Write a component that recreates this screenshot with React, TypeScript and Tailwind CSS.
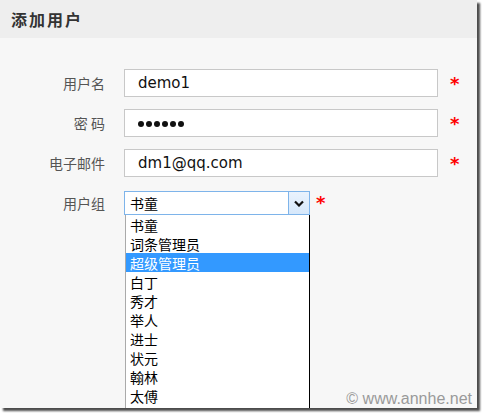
const cjk = "font-['Noto_Sans_CJK_SC',sans-serif]";

function Star({ className = "" }: { className?: string }) {
  return (
    <span className={`text-[18px] font-bold leading-none text-[#ff0000] font-['DejaVu_Sans',sans-serif] ${className}`}>
      *
    </span>
  );
}

function Row({ label, children }: { label: string; children: React.ReactNode }) {
  return (
    <div className="flex h-[28px] items-center">
      <div className={`w-[105px] text-right text-[14px] text-[#555] ${cjk}`}>{label}</div>
      <div className="ml-[19px] flex h-full w-[314px] items-center border border-[#c8c8c8] bg-white pl-[13px] text-[15px] text-[#111] font-['DejaVu_Sans',sans-serif]">
        {children}
      </div>
      <Star className="ml-[12px] mt-[2px]" />
    </div>
  );
}

const groups = ["书童", "词条管理员", "超级管理员", "白丁", "秀才", "举人", "进士", "状元", "翰林", "太傅"];

export default function App() {
  return (
    <div className="h-[413px] w-[482px] overflow-hidden bg-white">
      <div className="h-[408px] w-[477px] bg-[#f7f7f7] shadow-[3px_3px_2px_rgba(0,0,0,0.7)]">
        {/* Title */}
        <div className="flex h-[38px] items-center bg-[#eeeeee] pl-[11px]">
          <h1 className={`text-[16px] font-bold tracking-[2px] text-[#333] ${cjk}`}>添加用户</h1>
        </div>

        {/* Form */}
        <div className="flex flex-col gap-[12px] pt-[31px]">
          <Row label="用户名">demo1</Row>
          <Row label="密 码">
            <div className="flex gap-[2px] pt-[2px]">
              {[0, 1, 2, 3, 4, 5].map((i) => (
                <span key={i} className="h-[6px] w-[6px] rounded-full bg-[#111]" />
              ))}
            </div>
          </Row>
          <Row label="电子邮件">dm1@qq.com</Row>

          <div className="mt-[2px] flex h-[24px] items-start">
            <div className={`w-[105px] pt-[2px] text-right text-[14px] text-[#555] ${cjk}`}>用户组</div>
            <div className="relative ml-[19px] flex h-[24px] w-[186px] border border-[#7eb4ea] bg-white">
              <div className={`flex flex-1 items-center pl-[5px] text-[14px] text-black ${cjk}`}>书童</div>
              <div className="flex w-[21px] items-center justify-center border-l border-[#7eb4ea] bg-gradient-to-b from-[#eaf3fd] to-[#d6e8fb]">
                <svg width="10" height="7" viewBox="0 0 10 7">
                  <path d="M1 1.5 L5 5.5 L9 1.5" fill="none" stroke="#111" strokeWidth="2.2" />
                </svg>
              </div>

              {/* Open list */}
              <ul className={`absolute left-[0px] top-[23px] h-[193px] w-[185px] border-l border-l-[#aaa] border-r border-r-black bg-white text-[14px] text-black ${cjk}`}>
                {groups.map((g) => (
                  <li
                    key={g}
                    className={`flex h-[19px] items-center pl-[4px] leading-none ${
                      g === "超级管理员" ? "bg-[#3399ff] text-white" : ""
                    }`}
                  >
                    {g}
                  </li>
                ))}
              </ul>
            </div>
            <Star className="ml-[6px] mt-[3px]" />
          </div>
        </div>

        {/* Watermark */}
        <div className="mt-[172px] pr-[5px] text-right text-[16px] text-[#9a9a9a] font-['Liberation_Sans',sans-serif]">
          © www.annhe.net
        </div>
      </div>
    </div>
  );
}
